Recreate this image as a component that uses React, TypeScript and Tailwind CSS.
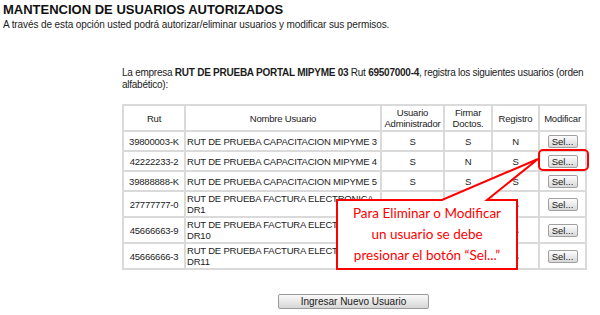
import React from 'react';

type Row = { rut: string; name: string; admin: string; firmar: string; registro: string; tall?: boolean };

const rows: Row[] = [
  { rut: '39800003-K', name: 'RUT DE PRUEBA CAPACITACION MIPYME 3', admin: 'S', firmar: 'S', registro: 'N' },
  { rut: '42222233-2', name: 'RUT DE PRUEBA CAPACITACION MIPYME 4', admin: 'S', firmar: 'N', registro: 'S' },
  { rut: '39888888-K', name: 'RUT DE PRUEBA CAPACITACION MIPYME 5', admin: 'S', firmar: 'S', registro: 'S' },
  { rut: '27777777-0', name: 'RUT DE PRUEBA FACTURA ELECTRONICA DR1', admin: 'S', firmar: 'S', registro: 'S', tall: true },
  { rut: '45666663-9', name: 'RUT DE PRUEBA FACTURA ELECTRONICA DR10', admin: 'S', firmar: 'S', registro: 'S', tall: true },
  { rut: '45666666-3', name: 'RUT DE PRUEBA FACTURA ELECTRONICA DR11', admin: 'S', firmar: 'S', registro: 'S', tall: true },
];

function SelButton() {
  return (
    <button className="h-[13px] w-[30px] rounded-[2px] border border-[#a0a0a0] bg-gradient-to-b from-[#fdfdfd] to-[#d8d8d8] text-[9.5px] leading-[11px] tracking-normal text-[#222]">
      Sel...
    </button>
  );
}

const cell = 'border-2 border-[#dadada] p-0 text-center align-middle';

export default function App() {
  return (
    <div className="relative h-[315px] w-[600px] overflow-hidden bg-white font-['Liberation_Sans',Arial,sans-serif] text-[#1c1c1c]">
      <div className="px-[3px] pt-[3px]">
        <h1 className="text-[13px] font-bold leading-[14px] text-[#111]">MANTENCION DE USUARIOS AUTORIZADOS</h1>
        <p className="mt-[2px] text-[10px] leading-[12px] tracking-[-0.1px]">
          A través de esta opción usted podrá autorizar/eliminar usuarios y modificar sus permisos.
        </p>
      </div>

      <div className="ml-[122px] mt-[36px] w-[470px]">
        <p className="text-[10px] leading-[12px] tracking-[-0.25px]">
          La empresa <b>RUT DE PRUEBA PORTAL MIPYME 03</b> Rut <b>69507000-4</b>, registra los siguientes usuarios (orden
          alfabético):
        </p>

        <table className="mt-[13px] w-[463px] table-fixed border-collapse text-[9.5px] leading-[11px] tracking-[-0.2px]">
          <colgroup>
            <col className="w-[62px]" />
            <col className="w-[196px]" />
            <col className="w-[63px]" />
            <col className="w-[48px]" />
            <col className="w-[47px]" />
            <col className="w-[47px]" />
          </colgroup>
          <thead>
            <tr className="h-[26px]">
              <th className={`${cell} font-normal`}>Rut</th>
              <th className={`${cell} font-normal`}>Nombre Usuario</th>
              <th className={`${cell} font-normal`}>Usuario Administrador</th>
              <th className={`${cell} font-normal`}>Firmar Doctos.</th>
              <th className={`${cell} font-normal`}>Registro</th>
              <th className={`${cell} font-normal`}>Modificar</th>
            </tr>
          </thead>
          <tbody>
            {rows.map(r => (
              <tr key={r.rut} className={r.tall ? 'h-[26px]' : 'h-[20px]'}>
                <td className={cell}>{r.rut}</td>
                <td className="border-2 border-[#dadada] p-0 pl-[1px] text-left align-middle">{r.name}</td>
                <td className={cell}>{r.admin}</td>
                <td className={cell}>{r.firmar}</td>
                <td className={cell}>{r.registro}</td>
                <td className={cell}><SelButton /></td>
              </tr>
            ))}
          </tbody>
        </table>

        <div className="mt-[24px] flex w-[463px] justify-center">
          <button className="h-[15px] w-[151px] rounded-[2px] border border-[#9a9a9a] bg-gradient-to-b from-[#fafafa] to-[#d6d6d6] text-[10px] leading-[13px] text-[#1a1a1a]">
            Ingresar Nuevo Usuario
          </button>
        </div>
      </div>

      {/* callout over the table */}
      <svg className="absolute left-0 top-0" width="600" height="315" viewBox="0 0 600 315">
        <rect x="539" y="150" width="49" height="20" rx="4" fill="none" stroke="#ff0000" strokeWidth="2" />
        <path d="M337 200 L442 200 L538 159 L487 200 L517 200 L517 269 L337 269 Z" fill="#fff" stroke="#ff0000" strokeWidth="2" strokeLinejoin="miter" />
      </svg>
      <div className="absolute left-[338px] top-[203px] w-[178px] text-center font-['Lato','Open_Sans',sans-serif] text-[13.5px] leading-[21px] text-[#ff0000]">
        Para Eliminar o Modificar
        <br />
        un usuario se debe
        <br />
        presionar el botón “Sel...”
      </div>
    </div>
  );
}
